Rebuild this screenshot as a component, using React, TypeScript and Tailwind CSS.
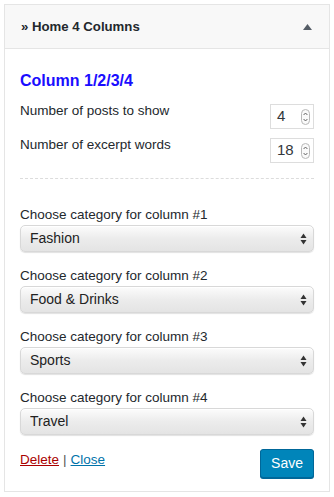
const font = { fontFamily: '"Liberation Sans", Arial, sans-serif' };

const columns = [
  { n: 1, value: "Fashion" },
  { n: 2, value: "Food & Drinks" },
  { n: 3, value: "Sports" },
  { n: 4, value: "Travel" },
];

const Spinner = () => (
  <svg width="9" height="16" viewBox="0 0 9 16" className="shrink-0">
    <rect x="0.5" y="0.5" width="8" height="15" rx="4" fill="#fafafa" stroke="#b8b8b8" />
    <path d="M2.6 6 L4.5 4 L6.4 6" fill="none" stroke="#555" strokeWidth="0.9" />
    <path d="M2.6 10 L4.5 12 L6.4 10" fill="none" stroke="#555" strokeWidth="0.9" />
  </svg>
);

const NumberField = ({ label, value }: { label: string; value: string }) => (
  <div className="flex items-start justify-between">
    <span className="-mt-[1px] text-[13.5px] leading-[16px] text-[#23282d]">{label}</span>
    <div className="flex h-[25px] w-[44px] items-center justify-between border border-[#dddddd] bg-white pl-[6px] pr-[3px]">
      <span className="text-[15px] text-[#32373c]">{value}</span>
      <Spinner />
    </div>
  </div>
);

const SelectArrows = () => (
  <svg width="7" height="12" viewBox="0 0 7 12" className="pointer-events-none absolute right-[7px] top-1/2 -translate-y-1/2">
    <path d="M3.5 0.5 L6.5 5 H0.5 Z" fill="#333" />
    <path d="M3.5 11.5 L6.5 7 H0.5 Z" fill="#333" />
  </svg>
);

export default function App() {
  return (
    <div className="min-h-[497px] bg-white p-[4px]" style={font}>
      <div className="w-[326px] border border-[#e5e5e5] bg-white">
        <div className="flex h-[44px] items-center justify-between border-b border-[#e5e5e5] bg-[#f8f8f8] pl-[16px] pr-[17px]">
          <h3 className="text-[13.2px] font-bold text-[#23282d]">» Home 4 Columns</h3>
          <svg width="9" height="6" viewBox="0 0 9 6">
            <path d="M4.5 0 L9 6 H0 Z" fill="#555d66" />
          </svg>
        </div>

        <div className="px-[15px] pb-[13px] pt-[22px]">
          <h4 className="text-[16px] font-bold leading-[20px] text-[#1a0dff]">Column 1/2/3/4</h4>

          <div className="mt-[13px] flex flex-col gap-[9px]">
            <NumberField label="Number of posts to show" value="4" />
            <NumberField label="Number of excerpt words" value="18" />
          </div>

          <div className="mt-[15px] border-t border-dashed border-[#dcdcdc]" />

          <div className="mt-[28px] flex flex-col gap-[16px]">
            {columns.map((c) => (
              <div key={c.n}>
                <label className="block text-[13.5px] leading-[16px] text-[#23282d]">
                  Choose category for column #{c.n}
                </label>
                <div className="relative mt-[2px]">
                  <select
                    defaultValue={c.value}
                    className="h-[27px] w-full appearance-none rounded-[5px] border border-[#d8d8d8] bg-gradient-to-b from-[#fcfcfc] via-[#ececec] to-[#e4e4e4] pl-[9px] pr-[20px] text-[14px] text-[#222] shadow-[0_1px_1px_rgba(0,0,0,0.12),inset_0_1px_0_#fff]"
                    style={font}
                  >
                    <option>{c.value}</option>
                  </select>
                  <SelectArrows />
                </div>
              </div>
            ))}
          </div>

          <div className="mt-[14px] flex items-start justify-between">
            <div className="pt-[1px] text-[13.5px] text-[#555]">
              <a href="#" className="text-[#a00] underline">Delete</a>
              <span className="mx-[4px]">|</span>
              <a href="#" className="text-[#0073aa] underline">Close</a>
            </div>
            <button className="h-[29px] rounded-[3px] border border-[#006799] bg-[#0085ba] px-[10px] text-[14px] font-medium text-white shadow-[0_1px_0_#006799]">
              Save
            </button>
          </div>
        </div>
      </div>
    </div>
  );
}
